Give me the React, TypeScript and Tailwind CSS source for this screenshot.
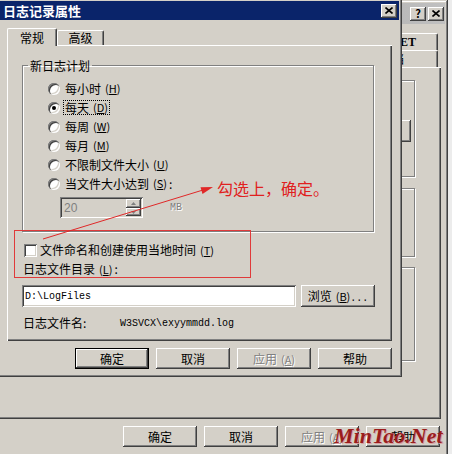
import React from "react";

const raised =
  "shadow-[inset_-1px_-1px_#404040,inset_1px_1px_#ffffff,inset_-2px_-2px_#808080,inset_2px_2px_#d4d0c8]";
const frame =
  "shadow-[inset_-1px_-1px_#404040,inset_1px_1px_#d4d0c8,inset_-2px_-2px_#808080,inset_2px_2px_#ffffff]";
const sunken =
  "shadow-[inset_1px_1px_#808080,inset_-1px_-1px_#ffffff,inset_2px_2px_#404040,inset_-2px_-2px_#d4d0c8]";
const panel =
  "shadow-[inset_1px_1px_#ffffff,inset_-1px_-1px_#404040,inset_-2px_-2px_#808080]";
const etched = "border border-[#808080] shadow-[1px_1px_0_#ffffff,inset_1px_1px_0_#ffffff]";
const disabledText = "text-[#808080] [text-shadow:1px_1px_0_#ffffff]";
const mono = "font-['Liberation_Mono',monospace] text-[10px]";

const Key = ({ k }: { k: string }) => (
  <span className="ml-[4px] text-[11px]">
    (<span className="underline">{k}</span>)
  </span>
);

type btnProps = {
  label: React.ReactNode;
  isDefault?: boolean;
  disabled?: boolean;
  h?: string;
};
const Btn = ({ label, isDefault, disabled, h = "h-[21px]" }: btnProps) => (
  <div
    className={`flex ${h} w-[74px] items-center justify-center text-[12px] ${raised} ${
      isDefault ? "border border-black" : ""
    } ${disabled ? disabledText : "text-black"}`}
  >
    {label}
  </div>
);

const CloseGlyph = () => (
  <svg width="8" height="7" viewBox="0 0 8 7">
    <path d="M0.5 0.5L7.5 6.5M7.5 0.5L0.5 6.5" stroke="#000" strokeWidth="1.6" />
  </svg>
);

const Radio = ({ checked }: { checked?: boolean }) => (
  <span className="flex h-[12px] w-[12px] shrink-0 items-center justify-center rounded-full bg-white shadow-[inset_1px_1px_0_#808080,inset_2px_2px_0_#404040,inset_-1px_-1px_0_#ffffff,inset_-2px_-2px_0_#d4d0c8]">
    {checked && <span className="h-[4px] w-[4px] rounded-full bg-black" />}
  </span>
);

const radios = [
  { label: "每小时", k: "H" },
  { label: "每天", k: "D", checked: true },
  { label: "每周", k: "W" },
  { label: "每月", k: "M" },
  { label: "不限制文件大小", k: "U" },
  { label: "当文件大小达到", k: "S", colon: true },
];

const tabBase =
  "flex items-center justify-center rounded-tl-[2px] rounded-tr-[2px] border-l border-t border-r border-l-white border-t-white border-r-[#404040] shadow-[inset_-1px_0_0_#808080] bg-[#d4d0c8] text-[12px]";

const FrontDialog = () => (
  <div
    className={`absolute left-[-3px] top-[-2px] z-10 flex h-[379px] w-[405px] flex-col bg-[#d4d0c8] p-[3px] ${frame}`}
  >
    <div className="flex h-[19px] items-center justify-between bg-[#0a246a] pl-[3px] pr-[2px]">
      <span className="text-[13px] font-bold leading-none text-white">日志记录属性</span>
      <div className={`flex h-[14px] w-[16px] items-center justify-center bg-[#d4d0c8] ${raised}`}>
        <CloseGlyph />
      </div>
    </div>

    <div className="mt-[8px] flex h-[17px] items-end pl-[7px]">
      <div className={`relative z-10 -mb-px h-[18px] w-[50px] ${tabBase}`}>常规</div>
      <div className={`h-[15px] w-[47px] ${tabBase}`}>高级</div>
    </div>

    <div className={`ml-[7px] flex h-[296px] w-[385px] flex-col pl-[15px] ${panel}`}>
      <fieldset className={`mt-[13px] w-[352px] p-0 ${etched}`}>
        <legend className="ml-[5px] px-[2px] text-[12px] leading-[15px]">新日志计划</legend>
        <div className="flex flex-col pb-[13px] pl-[25px] pt-[6px]">
          {radios.map((r) => (
            <div key={r.k} className="flex h-[19px] items-center gap-[3px] text-[12px]">
              <Radio checked={r.checked} />
              <span
                className={`flex items-center px-[1px] leading-[13px] ${
                  r.checked ? "border border-dotted border-black" : "border border-transparent"
                }`}
              >
                {r.label}
                <Key k={r.k} />
                {r.colon && <span className="ml-[2px]">:</span>}
              </span>
            </div>
          ))}
          <div className="mt-[4px] flex items-center pl-[12px]">
            <div
              className={`flex h-[21px] w-[83px] items-center justify-between bg-[#d4d0c8] pl-[4px] pr-[2px] ${sunken}`}
            >
              <span className="font-['Liberation_Sans',sans-serif] text-[12px] text-[#808080]">20</span>
              <div className="flex w-[15px] flex-col">
                <div className={`flex h-[9px] items-center justify-center ${raised}`}>
                  <svg width="5" height="3" viewBox="0 0 5 3">
                    <path d="M2.5 0L5 3H0Z" fill="#808080" />
                  </svg>
                </div>
                <div className={`flex h-[8px] items-center justify-center ${raised}`}>
                  <svg width="5" height="3" viewBox="0 0 5 3">
                    <path d="M0 0H5L2.5 3Z" fill="#808080" />
                  </svg>
                </div>
              </div>
            </div>
            <span className={`ml-[27px] ${mono} ${disabledText}`}>MB</span>
          </div>
        </div>
      </fieldset>

      <div className="mt-[9px] flex h-[18px] items-center gap-[3px] pl-[2px] text-[12px]">
        <span className={`h-[13px] w-[13px] bg-white ${sunken}`} />
        <span>
          文件命名和创建使用当地时间
          <Key k="T" />
        </span>
      </div>
      <div className="mt-px flex h-[18px] items-center pl-px text-[12px]">
        日志文件目录
        <Key k="L" />
        <span className="ml-[2px]">:</span>
      </div>
      <div className="mt-[7px] flex gap-[5px]">
        <div className={`flex h-[22px] w-[274px] items-center bg-white pl-[3px] ${sunken} ${mono}`}>
          D:\LogFiles
        </div>
        <Btn
          h="h-[22px]"
          label={
            <span>
              浏览
              <Key k="B" />
              <span className={mono}>...</span>
            </span>
          }
        />
      </div>
      <div className="mt-[7px] flex h-[18px] items-center pl-px text-[12px]">
        <span className="w-[97px]">日志文件名:</span>
        <span className={mono}>W3SVCX\exyymmdd.log</span>
      </div>
    </div>

    <div className="mt-[7px] flex gap-[7px] pl-[75px]">
      <Btn label="确定" isDefault />
      <Btn label="取消" />
      <Btn
        label={
          <span>
            应用
            <Key k="A" />
          </span>
        }
        disabled
      />
      <Btn label="帮助" />
    </div>
  </div>
);

const BackDialog = () => (
  <div
    className={`absolute left-[-10px] top-0 flex h-[470px] w-[458px] flex-col bg-[#d4d0c8] p-[3px] ${frame}`}
  >
    <div className="flex h-[21px] items-center justify-end gap-[2px] bg-gradient-to-r from-[#808080] to-[#c0c0c0] pr-[1px]">
      <div
        className={`flex h-[14px] w-[16px] items-center justify-center bg-[#d4d0c8] text-[11px] font-bold leading-none ${raised}`}
      >
        ?
      </div>
      <div className={`flex h-[14px] w-[16px] items-center justify-center bg-[#d4d0c8] ${raised}`}>
        <CloseGlyph />
      </div>
    </div>

    <div className="mt-[9px] flex h-[17px] justify-end pr-[7px]">
      <div className={`h-[17px] w-[100px] !justify-end pr-[21px] ${tabBase} font-['Liberation_Serif',serif] font-bold`}>
        ASP.NET
      </div>
    </div>
    <div className="flex h-[17px] justify-end pr-[7px]">
      <div className={`h-[17px] w-[100px] !justify-end pr-[33px] ${tabBase}`}>文档</div>
    </div>

    <div className={`mr-[4px] flex h-[352px] flex-col items-end pr-[26px] ${panel}`}>
      <div className={`mt-[13px] flex h-[97px] w-[300px] justify-end pr-[3px] pt-[39px] ${etched}`}>
        <div className={`h-[22px] w-[74px] ${raised}`} />
      </div>
      <div className={`mt-[11px] h-[69px] w-[300px] ${etched}`} />
      <div className={`mt-[10px] h-[94px] w-[300px] ${etched}`} />
    </div>

    <div className="mt-[7px] flex justify-end gap-[7px] pr-[5px]">
      <Btn label="确定" />
      <Btn label="取消" />
      <Btn
        label={
          <span>
            应用
            <Key k="A" />
          </span>
        }
        disabled
      />
      <Btn label="帮助" />
    </div>
  </div>
);

export default function App() {
  return (
    <div className="relative h-[454px] w-[452px] overflow-hidden bg-[#ececec] font-['Noto_Sans_CJK_SC','Noto_Sans',sans-serif] text-black">
      <BackDialog />
      <FrontDialog />

      {/* annotation */}
      <div className="absolute left-[14px] top-[230px] z-20 h-[48px] w-[237px] border border-[#e03a3a]" />
      <svg className="pointer-events-none absolute left-0 top-0 z-20" width="452" height="454">
        <line x1="43" y1="239" x2="203" y2="190" stroke="#e02828" strokeWidth="1" />
        <path d="M213 187L202.5 193.9L200.5 187.2Z" fill="#e02828" />
      </svg>
      <span className="absolute left-[217px] top-[178px] z-20 text-[16px] leading-[20px] text-[#e02020]">
        勾选上，确定。
      </span>
      <span className="absolute left-[334px] top-[423px] z-20 font-['Liberation_Serif',serif] text-[22px] font-bold italic leading-[26px] text-[#9b1c1c] [text-shadow:1px_1px_0_#d8a0a0]">
        MinTao.Net
      </span>
    </div>
  );
}
